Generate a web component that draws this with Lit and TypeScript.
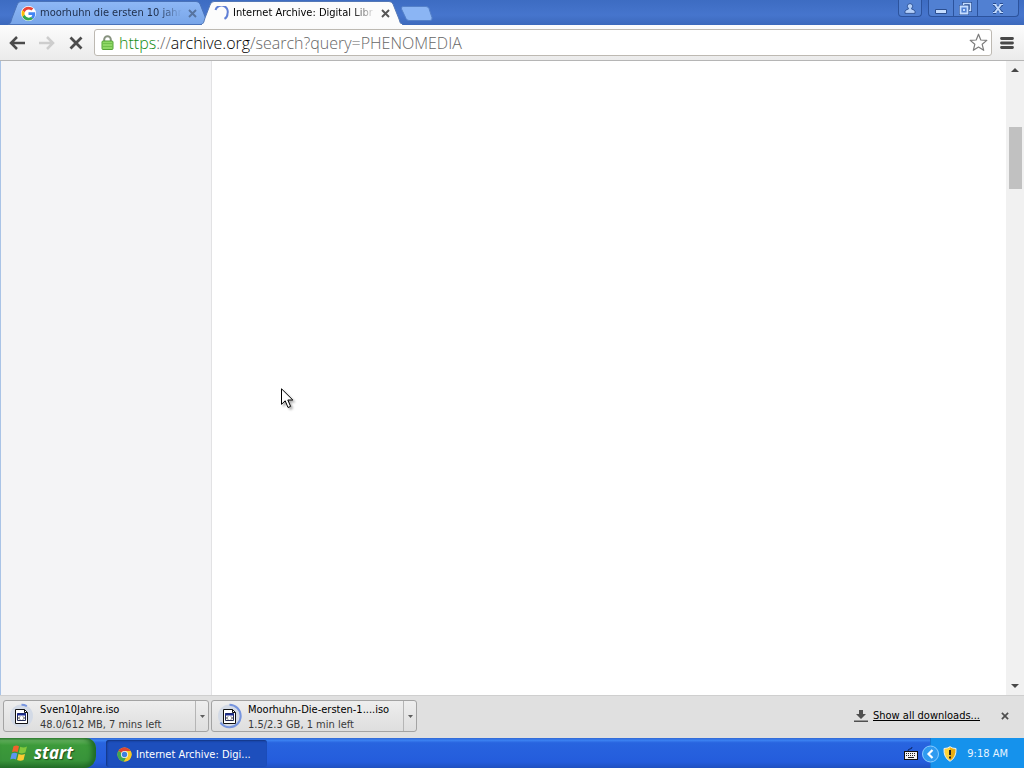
import { LitElement, html, svg, css } from "lit";
import { customElement, property } from "lit/decorators.js";

const closeIcon = (size: number) => html`<svg width=${size} height=${size} viewBox="0 0 9 9" aria-hidden="true">
  <path d="M1 1 8 8M8 1 1 8" fill="none" stroke="currentColor" stroke-width="1.9" />
</svg>`;

const googleIcon = html`<svg width="15" height="15" viewBox="0 0 48 48" aria-hidden="true">
  <circle cx="24" cy="24" r="24" fill="#fff" />
  <path fill="#ea4335" d="M24 11c3.500 0 6.600 1.200 9 3.500l6.500-6.500C35.500 4.300 30.200 2 24 2 15.400 2 8 6.900 4.400 14.100l7.600 5.900C13.800 14.700 18.500 11 24 11z" />
  <path fill="#4285f4" d="M45.500 24.500c0-1.500-.1-3-.4-4.500H24v9h12.100c-.6 3-2.200 5.300-4.700 6.900l7.300 5.700c4.300-4 6.800-9.800 6.800-17.100z" />
  <path fill="#fbbc05" d="M12 28.300a13.500 13.500 0 0 1 0-8.500l-7.600-5.900a22.400 22.400 0 0 0 0 20.200z" />
  <path fill="#34a853" d="M24 46c6 0 11-2 14.700-5.300l-7.300-5.700c-2 1.400-4.600 2.200-7.400 2.200-5.600 0-10.300-3.800-12-8.900l-7.600 5.900C8 41.100 15.400 46 24 46z" />
</svg>`;

const spinnerIcon = html`<svg width="15" height="15" viewBox="0 0 15 15" aria-hidden="true">
  <path d="M1.500 4A6 6 0 0 1 13.500 7.500 6 6 0 0 1 10.500 12.800" fill="none" stroke="#5f7fd6" stroke-width="2" />
</svg>`;

const chromeIcon = html`<svg width="15" height="15" viewBox="0 0 16 16" aria-hidden="true">
  <circle cx="8" cy="8" r="7.500" fill="#f6c927" />
  <path d="M8 8 1.500 4.300A7.500 7.500 0 0 1 14.500 4.300z" fill="#e0452f" />
  <path d="M1.500 4.300A7.500 7.500 0 0 0 7.500 15.500L10.500 10 8 8z" fill="#3fa750" />
  <path d="M8 4.300h6.500a7.500 7.500 0 0 1-7 11.200L11 9z" fill="#f6c927" />
  <circle cx="8" cy="8" r="3.800" fill="#f4f4f4" />
  <circle cx="8" cy="8" r="2.900" fill="#3f80dd" />
</svg>`;

const windowsFlag = html`<svg width="19" height="18" viewBox="0 0 19 18" aria-hidden="true">
  <path d="M3.500 2.200Q6.500.6 9 2.200L7.600 8.200Q5 6.800 2 8.200z" fill="#f0622c" />
  <path d="M10.200 2.700Q13.500 4.300 17 2.500L15.400 8.600Q12 10.200 8.800 8.700z" fill="#83c83c" />
  <path d="M1.700 9.500Q4.700 8 7.300 9.500L5.900 15.400Q3.200 14 .2 15.400z" fill="#5b96f2" />
  <path d="M8.500 9.900Q11.700 11.500 15 9.900L13.500 15.900Q10.400 17.400 7.100 15.900z" fill="#fbcb32" />
</svg>`;

@customElement("browser-tab")
class BrowserTab extends LitElement {
  @property() label = "";
  @property({ type: Boolean }) active = false;

  static styles = css`
    :host { display: grid; width: 202px; min-width: 0; height: 25px; }
    .shape, .content { grid-area: 1 / 1; min-width: 0; }
    .shape { width: 100%; height: 25px; }
    .content { display: flex; align-items: center; padding: 1px 13px 0 13px; gap: 3px; z-index: 1; }
    .pick {
      display: flex; flex: 1; min-width: 0; align-items: center; gap: 4px;
      border: 0; padding: 0; background: none; color: #1d2c48; font: 11px/14px var(--ui); text-align: left;
    }
    :host([active]) .pick { color: #000; }
    .icon { display: flex; }
    .label {
      flex: 1; overflow: hidden; white-space: nowrap;
      mask-image: linear-gradient(to right, #000 82%, transparent 98%);
    }
    .close { display: flex; border: 0; padding: 0; background: none; color: #56739f; }
    :host([active]) .close { color: #565656; }
  `;

  render() {
    const fill = this.active ? "#fcfcfc" : "url(#idle)";
    return html`
      <svg class="shape" viewBox="0 0 202 25" preserveAspectRatio="none" aria-hidden="true">
        <defs><linearGradient id="idle" x1="0" y1="0" x2="0" y2="1">
          <stop offset="0" stop-color="#8eb8f6" /><stop offset="1" stop-color="#78a5e8" />
        </linearGradient></defs>
        <path d="M0 24.500C3 24 3 21 4 18L9 5Q10 1.500 13 1.500H188Q191 1.500 192 4L198 19C199 22 199 24 202 24.500z"
          fill=${fill} stroke=${this.active ? "#5478b6" : "#4972b9"} stroke-width="1" />
        ${this.active ? svg`<path d="M1 24.500H201" stroke="#fcfcfc" />` : ""}
      </svg>
      <div class="content">
        <button class="pick" role="tab" aria-selected=${this.active ? "true" : "false"}>
          <span class="icon">${this.active ? spinnerIcon : googleIcon}</span>
          <span class="label">${this.label}</span>
        </button>
        <button class="close" aria-label="Close tab">${closeIcon(9)}</button>
      </div>`;
  }
}

@customElement("download-item")
class DownloadItem extends LitElement {
  @property() name = "";
  @property() status = "";
  @property({ type: Number }) progress = 0;

  static styles = css`
    :host {
      display: flex; box-sizing: border-box; width: 206px; height: 32px;
      border: 1px solid #a3a3a3; border-radius: 3px; background: linear-gradient(#eeeeee, #dedede);
    }
    button { border: 0; padding: 0; background: none; font: inherit; color: inherit; }
    .open { display: flex; flex: 1; min-width: 0; align-items: center; gap: 6px; padding: 0 5px; text-align: left; }
    .text { display: flex; flex-direction: column; min-width: 0; padding-top: 1px; white-space: nowrap; font: 11px/15px var(--ui); color: #3a3a3a; }
    .name { color: #000; }
    .more { display: flex; width: 13px; align-items: center; justify-content: center; border-left: 1px solid #b5b5b5; }
  `;

  render() {
    return html`
      <button class="open">
        <svg width="25" height="26" viewBox="0 0 25 26" aria-hidden="true">
          <circle cx="12.500" cy="13" r="11.500" fill="#d3dae6" />
          <circle cx="12.500" cy="13" r="11.200" fill="none" stroke="#7795df" stroke-width="2" pathLength="100"
            stroke-dasharray="${this.progress} 100" transform="rotate(-90 12.500 13)" />
          <path d="M6.500 6.500h9l3 3v11h-12z" fill="#fff" stroke="#111" />
          <path d="M15.500 6.500v3h3" fill="none" stroke="#111" />
          <path d="M8.500 10.500h8v7h-8z" fill="#fff" stroke="#222a55" />
          <path d="M8 11.500h9" stroke="#1a2c91" stroke-width="2" />
          <path d="M11 13.500 9.500 15l1.500 1.500M14 13.500l1.500 1.500-1.500 1.500" fill="none" stroke="#222" stroke-width=".9" />
        </svg>
        <span class="text"><span class="name">${this.name}</span><span>${this.status}</span></span>
      </button>
      <button class="more" aria-label="Download options">
        <svg width="5" height="3" viewBox="0 0 5 3" aria-hidden="true"><path d="M0 0h5L2.500 3z" fill="#5d5d5d" /></svg>
      </button>`;
  }
}

@customElement("app-root")
class AppRoot extends LitElement {
  static styles = css`
    :host {
      --ui: "DejaVu Sans Condensed", "DejaVu Sans", sans-serif;
      display: flex; flex-direction: column; height: 100vh; overflow: hidden;
      font: 11px/14px var(--ui); color: #000; background: #fff;
    }
    button { border: 0; padding: 0; background: none; color: inherit; font: inherit; }
    svg { display: block; }

    .titlebar { display: flex; height: 25px; padding: 0 5px 0 8px; background: linear-gradient(#3d6cc2, #4675cd 60%, #3c69bc); }
    .tabs { display: flex; min-width: 0; }
    .tabs browser-tab + browser-tab { margin-left: -9px; z-index: 1; }
    .newtab { align-self: flex-start; margin: 6px 0 0 -3px; }
    .window { display: flex; align-items: flex-start; margin-left: auto; gap: 6px; }
    .frame {
      display: flex; border: 1px solid #2c539d; border-top: 0; border-radius: 0 0 4px 4px;
      background: #5180d2;
    }
    .frame button { display: flex; width: 24px; height: 16px; align-items: center; justify-content: center; }
    .frame button + button { border-left: 1px solid #2c539d; }
    .frame .user { width: 22px; }
    .frame .shut { width: 41px; }

    .toolbar {
      display: flex; align-items: center; box-sizing: border-box; height: 36px; padding: 0 10px 0 9px; gap: 8px;
      background: linear-gradient(#fcfcfc, #ebebeb); border-bottom: 1px solid #b5b5b5;
    }
    .nav { display: flex; gap: 14px; padding-right: 3px; }
    .address {
      display: flex; flex: 1; min-width: 0; align-items: center; box-sizing: border-box; height: 27px;
      padding: 0 3px 0 6px; gap: 5px; border: 1px solid #bdb9b2; border-radius: 3px; background: #fff;
    }
    .url {
      flex: 1; min-width: 0; overflow: hidden; white-space: nowrap; text-decoration: none;
      font: 300 16px/24px "Open Sans", "Noto Sans", sans-serif; color: #666;
    }
    .secure { color: #148c14; }
    .host { color: #000; }

    .page { display: flex; flex: 1; min-height: 0; }
    .facets { width: 210px; border-left: 1px solid #a9c3e6; border-right: 1px solid #e2e2e4; background: #f4f4f6; }
    .results { flex: 1; background: #fff; }
    .scroll { display: flex; flex-direction: column; width: 18px; align-items: center; background: #f1f1f1; }
    .scroll button { display: flex; width: 18px; height: 18px; align-items: center; justify-content: center; }
    .track { flex: 1; display: flex; flex-direction: column; }
    .lead { flex: 48; }
    .thumb { flex: 62; width: 13px; background: #c1c1c1; }
    .rest { flex: 488; }

    .shelf {
      display: flex; align-items: center; box-sizing: border-box; height: 43px; padding: 0 15px 2px 3px; gap: 2px;
      border-top: 1px solid #cfcfcf; background: #e0e0e0;
    }
    .downloads { display: flex; gap: 2px; }
    .all { display: flex; align-items: center; gap: 5px; margin-left: auto; color: #000; font: 11px/14px var(--ui); }
    .shelf .dismiss { display: flex; margin-left: 19px; color: #4e4e4e; }

    .taskbar {
      display: flex; align-items: stretch; height: 30px; color: #fff;
      background: linear-gradient(#3168d5, #3a80f0 8%, #2864df 16%, #245cdc 80%, #1f50c0);
    }
    .start {
      display: flex; align-items: center; width: 96px; padding: 0 0 0 10px; gap: 5px;
      border-radius: 0 10px 12px 0; background: linear-gradient(#3f8f3f, #62b15c 8%, #3c9a3a 24%, #38933a 75%, #26722a);
      box-shadow: inset -4px 0 5px #1f6a25;
      font: italic 700 17px/22px "Open Sans", "Noto Sans", sans-serif; text-shadow: 1px 1px 1px #1d4b1d;
    }
    .task {
      display: flex; align-items: center; width: 161px; margin: 2px 0 1px 10px; padding: 2px 10px 0 11px; gap: 4px;
      border-radius: 3px; background: #1d4fbd; box-shadow: inset 1px 1px 2px #12347f; white-space: nowrap;
    }
    .tray {
      display: flex; align-items: center; margin-left: auto; padding: 1px 16px 0 0; gap: 4px;
      background: linear-gradient(to right, transparent 26px, #1477cf 26px, #1477cf 27px, #1592ec 27px);
    }
    .clock { margin-left: 6px; color: #e6f4ff; }
    .pointer { position: absolute; left: 281px; top: 388px; filter: drop-shadow(2px 2px 1px #00000050); }
  `;

  render() {
    return html`
      <header class="titlebar">
        <div class="tabs" role="tablist">
          <browser-tab label="moorhuhn die ersten 10 jahr"></browser-tab>
          <browser-tab active label="Internet Archive: Digital Libr"></browser-tab>
        </div>
        <button class="newtab" aria-label="New tab">
          <svg width="33" height="15" viewBox="0 0 33 15" aria-hidden="true">
            <path d="M3 .5h23q2 0 3 2l3 9q.6 3-2 3H9q-2 0-3-2L1.500 3Q1 .5 3 .5z" fill="#8bb5f4" stroke="#5480c8" />
          </svg>
        </button>
        <div class="window">
          <div class="frame">
            <button class="user" aria-label="User">
              <svg width="12" height="11" viewBox="0 0 12 11"><path d="M6 .6a2.600 2.600 0 0 1 1.800 4.500L7.500 6q3.200.6 3.500 2.500v1.900H1V8.500Q1.300 6.600 4.500 6l-.3-.9A2.600 2.600 0 0 1 6 .6z" fill="#b5d1fa" stroke="#2c4f90" stroke-width=".9" /></svg>
            </button>
          </div>
          <div class="frame">
            <button aria-label="Minimize">
              <svg width="12" height="12" viewBox="0 0 12 12"><path d="M.5 7.500h11v4H.5z" fill="#c4dcff" stroke="#2c4f90" /></svg>
            </button>
            <button aria-label="Restore">
              <svg width="13" height="13" viewBox="0 0 13 13">
                <path d="M4.500 1.500h7v7h-7z" fill="none" stroke="#264b90" stroke-width="3" />
                <path d="M4.500 1.500h7v7h-7z" fill="none" stroke="#c4dcff" stroke-width="1.500" />
                <path d="M1.500 4.500h7v7h-7z" fill="#5180d2" stroke="#264b90" stroke-width="3" />
                <path d="M1.500 4.500h7v7h-7z" fill="#5180d2" stroke="#c4dcff" stroke-width="1.800" />
                <path d="M4 7h2v2H4z" fill="#c4dcff" />
              </svg>
            </button>
            <button class="shut" aria-label="Close">
              <svg width="12" height="11" viewBox="0 0 12 11">
                <path d="M2.500 1.500l7 8M9.500 1.500l-7 8M1 1.500h3M8 1.500h3M1 9.500h3M8 9.500h3" fill="none" stroke="#264b90" stroke-width="3" />
                <path d="M3 1.500l6 8M9 1.500l-6 8" fill="none" stroke="#c4dcff" stroke-width="2" />
                <path d="M1 1.500h3.500M7.500 1.500H11M1 9.500h3.500M7.500 9.500H11" stroke="#c4dcff" />
              </svg>
            </button>
          </div>
        </div>
      </header>

      <nav class="toolbar">
        <div class="nav">
          <button aria-label="Back"><svg width="16" height="14" viewBox="0 0 16 14"><path d="M8 1 2 7l6 6M2.500 7H16" fill="none" stroke="#4b4b4b" stroke-width="2.500" /></svg></button>
          <button aria-label="Forward"><svg width="16" height="14" viewBox="0 0 16 14"><path d="M8 1l6 6-6 6M13.500 7H0" fill="none" stroke="#cdcdcd" stroke-width="2.500" /></svg></button>
          <button aria-label="Stop"><svg width="14" height="14" viewBox="0 0 14 14"><path d="M1.500 1.500l11 11M12.500 1.500l-11 11" fill="none" stroke="#4b4b4b" stroke-width="2.800" /></svg></button>
        </div>
        <div class="address">
          <svg width="13" height="15" viewBox="0 0 13 15" aria-hidden="true">
            <path d="M3.200 7V4.500a3.300 3.300 0 0 1 6.600 0V7" fill="none" stroke="#87927f" stroke-width="2" />
            <rect x="1" y="6" width="11" height="8.500" rx="1" fill="#8fd866" stroke="#53a335" />
            <path d="M2 8.500h9M2 11.500h9" stroke="#70c04c" />
          </svg>
          <a class="url" href="#"><span class="secure">https</span>://<span class="host">archive.org</span>/search?query=PHENOMEDIA</a>
          <button aria-label="Bookmark this page">
            <svg width="19" height="19" viewBox="0 0 19 19"><path d="M9.500 1.200 11.800 7l6 .4-4.600 3.900 1.500 6-5.200-3.300-5.200 3.300 1.500-6L1.200 7.400l6-.4z" fill="#fff" stroke="#7c7c7c" stroke-width="1.200" stroke-linejoin="round" /></svg>
          </button>
        </div>
        <button aria-label="Menu">
          <svg width="14" height="14" viewBox="0 0 14 14"><path d="M1.500 2.500h11M1.500 7h11M1.500 11.500h11" stroke="#484848" stroke-width="2.800" stroke-linecap="round" /></svg>
        </button>
      </nav>

      <main class="page">
        <aside class="facets"></aside>
        <section class="results"></section>
        <div class="scroll">
          <button aria-label="Scroll up"><svg width="8" height="4" viewBox="0 0 8 4"><path d="M0 4h8L4 0z" fill="#484848" /></svg></button>
          <div class="track"><div class="lead"></div><div class="thumb"></div><div class="rest"></div></div>
          <button aria-label="Scroll down"><svg width="8" height="4" viewBox="0 0 8 4"><path d="M0 0h8L4 4z" fill="#484848" /></svg></button>
        </div>
      </main>

      <section class="shelf">
        <div class="downloads">
          <download-item name="Sven10Jahre.iso" status="48.0/612 MB, 7 mins left" progress="8"></download-item>
          <download-item name="Moorhuhn-Die-ersten-1....iso" status="1.5/2.3 GB, 1 min left" progress="65"></download-item>
        </div>
        <a class="all" href="#">
          <svg width="14" height="14" viewBox="0 0 14 14" aria-hidden="true"><path d="M5 1h4v4h3L7 10 2 5h3zM0 11.500h14V13H0z" fill="#505050" /></svg>
          <span>Show all downloads...</span>
        </a>
        <button class="dismiss" aria-label="Close downloads bar">${closeIcon(8)}</button>
      </section>

      <footer class="taskbar">
        <button class="start">${windowsFlag}<span>start</span></button>
        <button class="task">${chromeIcon}<span>Internet Archive: Digi...</span></button>
        <div class="tray">
          <svg width="14" height="15" viewBox="0 0 14 15" aria-hidden="true">
            <path d="M4 5q0-2 2-2t2-2" fill="none" stroke="#0b2360" />
            <rect x=".5" y="5.500" width="13" height="8" fill="#f2f2f2" stroke="#111" />
            <path d="M2 7.500h10M2 9.500h10" stroke="#222" stroke-dasharray="1 1" /><path d="M4 11.500h6" stroke="#222" />
          </svg>
          <svg width="17" height="18" viewBox="0 0 17 18" aria-hidden="true">
            <circle cx="8.500" cy="9" r="8" fill="#2f9bf0" stroke="#8accff" />
            <path d="M10.500 5 6.500 9l4 4" fill="none" stroke="#fff" stroke-width="2.200" />
          </svg>
          <svg width="14" height="16" viewBox="0 0 14 16" aria-hidden="true">
            <path d="M7 .7Q9.500 2.500 13 2.500q.6 9-6 12.800Q.4 11.500 1 2.500 4.500 2.500 7 .7z" fill="#ffd53a" stroke="#e9eef5" />
            <path d="M7 1.500Q9.500 3 12.300 3.200 12.500 11 7 14.500z" fill="#e8ac12" />
            <path d="M7 4v5M7 10.500v2" stroke="#222" stroke-width="2" />
          </svg>
          <time class="clock">9:18 AM</time>
        </div>
      </footer>

      <svg class="pointer" width="13" height="21" viewBox="0 0 13 21" aria-hidden="true">
        <path d="M.5.8v15.500l3.700-3.500 2.800 6.700 2.600-1.100-2.800-6.400h5z" fill="#fff" stroke="#000" />
      </svg>`;
  }
}
